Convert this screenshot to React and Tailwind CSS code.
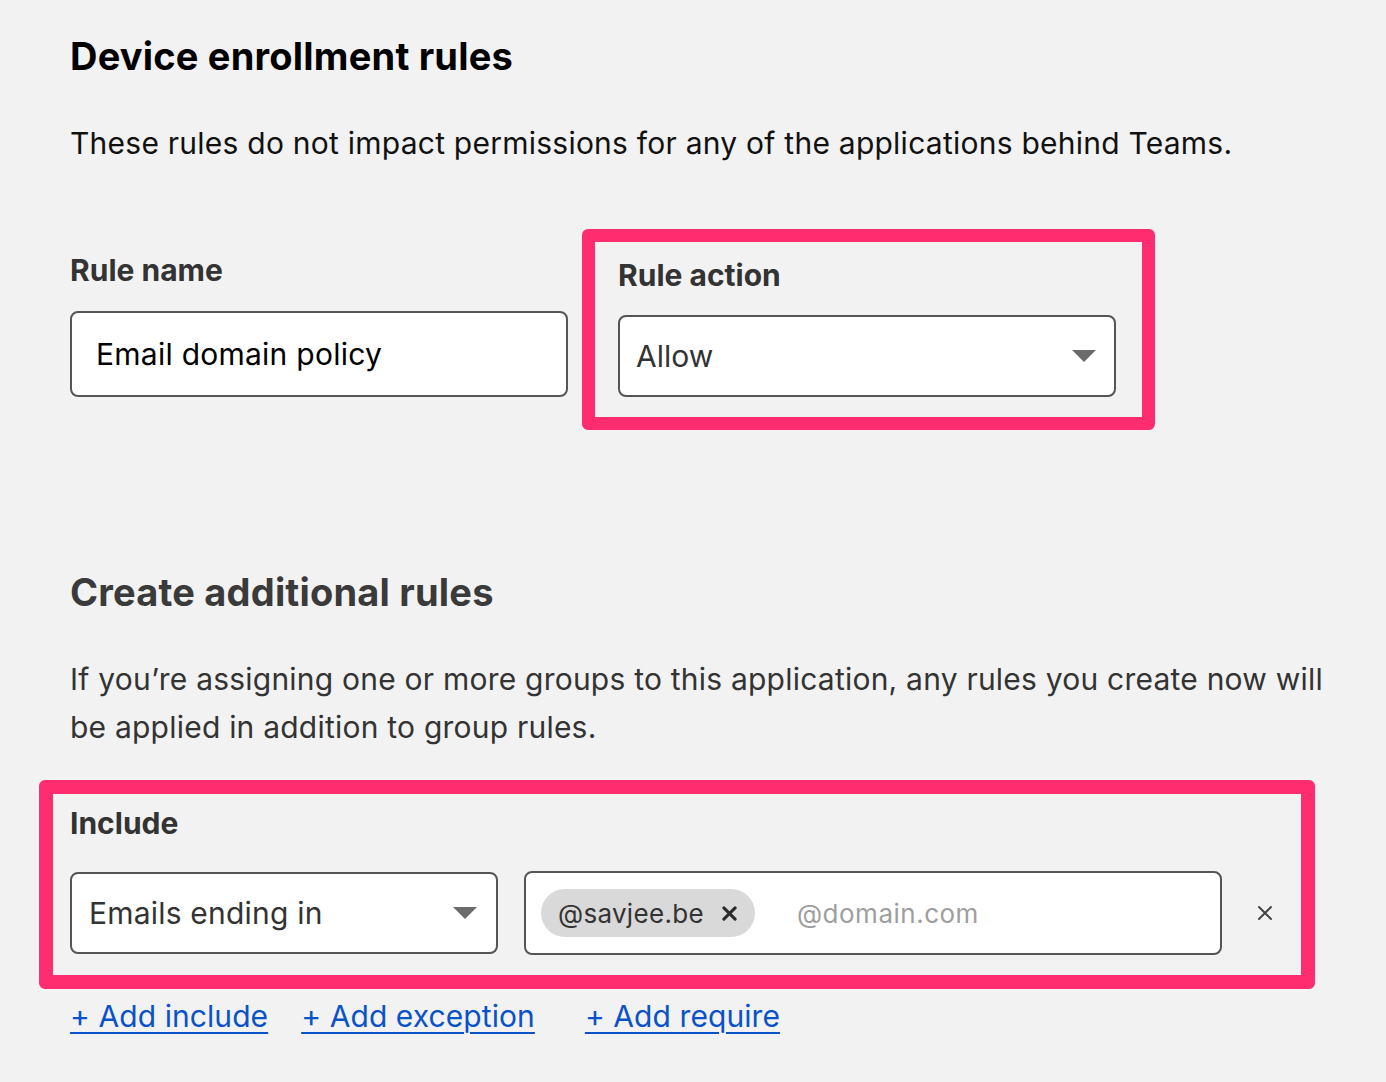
import React from 'react';

const font = { fontFamily: 'Inter, "Noto Sans", sans-serif' };

const Caret = () => (
  <svg width="24" height="12" viewBox="0 0 24 12" className="shrink-0">
    <polygon points="0,0 24,0 12,12" fill="#6b6b6b" />
  </svg>
);

const Cross = ({ size = 16, stroke = 2.5, color = '#333' }) => (
  <svg width={size} height={size} viewBox="0 0 16 16" className="shrink-0">
    <path d="M2 2 L14 14 M14 2 L2 14" stroke={color} strokeWidth={stroke} strokeLinecap="round" />
  </svg>
);

export default function App() {
  return (
    <div className="min-h-screen bg-[#f2f2f2] pl-[70px] pt-[33px] text-[#111]" style={font}>
      {/* heading */}
      <h1 className="text-[38px] leading-[46px] font-bold text-black tracking-[0.2px]">Device enrollment rules</h1>
      <p className="mt-[44px] text-[30px] leading-[40px] text-[#111] tracking-[0.24px]">
        These rules do not impact permissions for any of the applications behind Teams.
      </p>

      {/* rule name + action */}
      <div className="flex items-start mt-[89px]">
        <div className="w-[498px] shrink-0">
          <label className="block text-[30px] leading-[36px] font-bold text-[#333] tracking-[0px]">Rule name</label>
          <div className="mt-[23px] h-[86px] bg-white border-2 border-[#555] rounded-[8px] flex items-center pl-[24px] text-[30px] text-black tracking-[0.25px]">
            Email domain policy
          </div>
        </div>
        <div className="ml-[14px] -mt-[23px] border-[13px] border-[#ff2d6f] rounded-[6px] pt-[15px] pl-[23px] pr-[26px] pb-[20px]">
          <label className="block text-[30px] leading-[36px] font-bold text-[#333] tracking-[0px]">Rule action</label>
          <div className="mt-[22px] w-[498px] h-[82px] bg-white border-2 border-[#555] rounded-[8px] flex items-center justify-between pl-[16px] pr-[18px] text-[30px] text-[#333]">
            <span>Allow</span>
            <Caret />
          </div>
        </div>
      </div>

      {/* additional rules */}
      <h2 className="mt-[139px] text-[38px] leading-[46px] font-bold text-[#3a3a3a] tracking-[0.2px]">Create additional rules</h2>
      <p className="mt-[40px] w-[1275px] text-[30px] leading-[48px] text-[#333] tracking-[0.22px]">
        If you’re assigning one or more groups to this application, any rules you create now will be applied in addition to group rules.
      </p>

      <div className="-ml-[31px] mt-[29px] w-[1276px] border-[14px] border-[#ff2d6f] rounded-[6px] pt-[11px] pl-[17px] pb-[20px]">
        <label className="block text-[30px] leading-[36px] font-bold text-[#333] tracking-[0px]">Include</label>
        <div className="mt-[30px] flex items-center">
          <div className="w-[428px] h-[82px] bg-white border-2 border-[#555] rounded-[8px] flex items-center justify-between pl-[17px] pr-[19px] text-[30px] text-[#333] tracking-[0.2px]">
            <span>Emails ending in</span>
            <Caret />
          </div>
          <div className="ml-[26px] w-[698px] h-[84px] bg-white border-2 border-[#555] rounded-[8px] flex items-center pl-[15px]">
            <span className="h-[48px] w-[214px] rounded-full bg-[#d9d9d9] flex items-center pl-[17px] text-[26px] text-[#333] tracking-[0.3px]">
              @savjee.be
              <span className="ml-[18px]"><Cross size={15} stroke={3.2} color="#2a2a2a" /></span>
            </span>
            <span className="ml-[42px] text-[26px] text-[#9e9e9e] tracking-[0.5px]">@domain.com</span>
          </div>
          <span className="ml-[35px]"><Cross size={16} stroke={2} color="#444" /></span>
        </div>
      </div>

      {/* links */}
      <div className="mt-[9px] flex items-center text-[30px] leading-[36px] text-[#0a52c8] tracking-[0.08px]">
        <a className="underline underline-offset-[5px] decoration-2">+ Add include</a>
        <a className="ml-[33px] underline underline-offset-[5px] decoration-2">+ Add exception</a>
        <a className="ml-[50px] underline underline-offset-[5px] decoration-2">+ Add require</a>
      </div>
    </div>
  );
}
